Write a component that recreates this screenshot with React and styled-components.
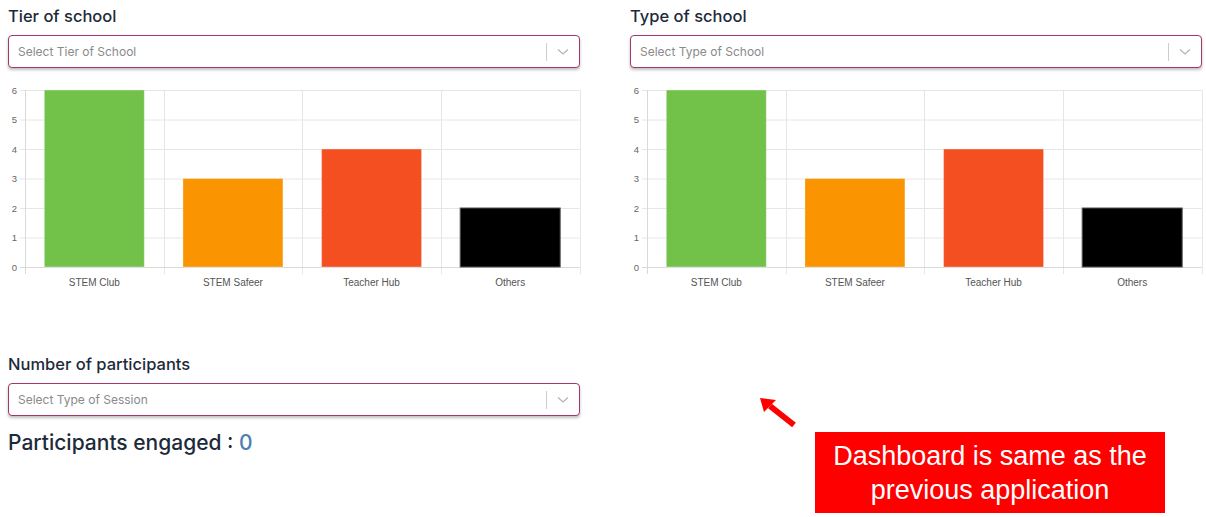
import React from 'react'
import styled, { createGlobalStyle } from 'styled-components'

const GlobalStyle = createGlobalStyle`
  body {
    margin: 0;
    background: #fff;
    font-family: Inter, "Open Sans", "Liberation Sans", sans-serif;
  }
`

const categories = [
  { label: 'STEM Club', value: 6, color: '#72c24a' },
  { label: 'STEM Safeer', value: 3, color: '#fa9400' },
  { label: 'Teacher Hub', value: 4, color: '#f44f20' },
  { label: 'Others', value: 2, color: '#000000' },
]

function BarChart({ data }) {
  const left = 17
  const right = 571.5
  const top = 10
  const unit = 29.5
  const base = top + 6 * unit
  const cat = (right - left) / data.length
  return (
    <ChartSvg width="572" height="215" viewBox="0 0 572 215">
      {[0, 1, 2, 3, 4, 5, 6].map(v => {
        const y = base - v * unit + 0.5
        return (
          <g key={v}>
            <line x1={left - 5} x2={right} y1={y} y2={y} stroke="#e6e6e6" strokeWidth="1" />
            <text x={left - 8} y={y + 3} textAnchor="end" fontSize="9.5" fill="#666"
              fontFamily="Liberation Sans, Arial, sans-serif">{v}</text>
          </g>
        )
      })}
      {[0, 1, 2, 3, 4].map(i => {
        const x = Math.round(left + i * cat) + 0.5
        return <line key={i} x1={x} x2={x} y1={top} y2={base + 7} stroke="#e6e6e6" strokeWidth="1" />
      })}
      <line x1={left + 0.5} x2={left + 0.5} y1={top} y2={base + 7} stroke="#d9d9d9" />
      <line x1={left - 5} x2={right} y1={base + 0.5} y2={base + 0.5} stroke="#d9d9d9" />
      {data.map((d, i) => {
        const cx = left + cat * i + cat / 2
        const h = d.value * unit
        return (
          <g key={d.label}>
            <rect x={cx - 50} y={base - h} width="100" height={h} fill={d.color}
              stroke={d.color === '#000000' ? '#555' : 'rgba(255,255,255,0.35)'} strokeWidth="1" />
            <text x={cx} y={base + 19} textAnchor="middle" fontSize="10" fill="#555"
              fontFamily="Liberation Sans, Arial, sans-serif">{d.label}</text>
          </g>
        )
      })}
    </ChartSvg>
  )
}

function Select({ placeholder }) {
  return (
    <SelectBox>
      <Placeholder>{placeholder}</Placeholder>
      <Indicators>
        <Separator />
        <svg width="12" height="8" viewBox="0 0 12 8">
          <path d="M1 1.5 L6 6 L11 1.5" fill="none" stroke="#b5b5b5" strokeWidth="1.3" />
        </svg>
      </Indicators>
    </SelectBox>
  )
}

export default function App() {
  return (
    <Page>
      <GlobalStyle />
      <ChartRow>
        <Panel>
          <Title>Tier of school</Title>
          <Select placeholder="Select Tier of School" />
          <BarChart data={categories} />
        </Panel>
        <Panel>
          <Title>Type of school</Title>
          <Select placeholder="Select Type of School" />
          <BarChart data={categories} />
        </Panel>
      </ChartRow>
      <ParticipantsBlock>
        <Title>Number of participants</Title>
        <Select placeholder="Select Type of Session" />
        <Engaged>Participants engaged : <Count>0</Count></Engaged>
      </ParticipantsBlock>

      <Arrow width="40" height="32" viewBox="0 0 40 32">
        <path d="M36 28 L12 9" stroke="#ff0000" strokeWidth="6" />
        <path d="M2 1 L18 3 L6 15 Z" fill="#ff0000" />
      </Arrow>
      <Note>Dashboard is same as the<br />previous application</Note>
    </Page>
  )
}

const Page = styled.div`
  position: relative;
  width: 1206px;
  height: 517px;
  padding: 4px 4px 0 8px;
  box-sizing: border-box;
  color: #1d2a3a;
  overflow: hidden;
`
const ChartRow = styled.div`
  display: grid;
  grid-template-columns: 572px 572px;
  column-gap: 50px;
`
const Panel = styled.div`
  display: flex;
  flex-direction: column;
`
const Title = styled.div`
  font-size: 16.5px;
  line-height: 24px;
  font-weight: 500;
  margin-bottom: 7px;
`
const SelectBox = styled.div`
  display: flex;
  align-items: center;
  justify-content: space-between;
  height: 33px;
  box-sizing: border-box;
  border: 1.5px solid #a3376a;
  border-radius: 4px;
  box-shadow: 0 2px 3px rgba(0, 0, 0, 0.25);
  padding: 0 10px 0 9px;
  background: #fff;
`
const Placeholder = styled.span`
  font-size: 12px;
  color: #8a8a8a;
`
const Indicators = styled.div`
  display: flex;
  align-items: center;
  gap: 10px;
`
const Separator = styled.span`
  width: 1px;
  height: 18px;
  background: #cccccc;
`
const ChartSvg = styled.svg`
  display: block;
  margin-top: 12px;
  overflow: visible;
`
const ParticipantsBlock = styled.div`
  width: 572px;
  margin-top: 57px;
`
const Engaged = styled.div`
  margin-top: 14px;
  font-size: 21px;
  font-weight: 500;
`
const Count = styled.span`
  color: #4a7fb0;
`
const Arrow = styled.svg`
  position: absolute;
  left: 758px;
  top: 397px;
`
const Note = styled.div`
  position: absolute;
  left: 815px;
  top: 432px;
  width: 350px;
  height: 81px;
  background: #ff0000;
  color: #fff;
  font-family: "Liberation Sans", Arial, sans-serif;
  font-size: 27px;
  line-height: 34px;
  text-align: center;
  display: flex;
  align-items: center;
  justify-content: center;
`
